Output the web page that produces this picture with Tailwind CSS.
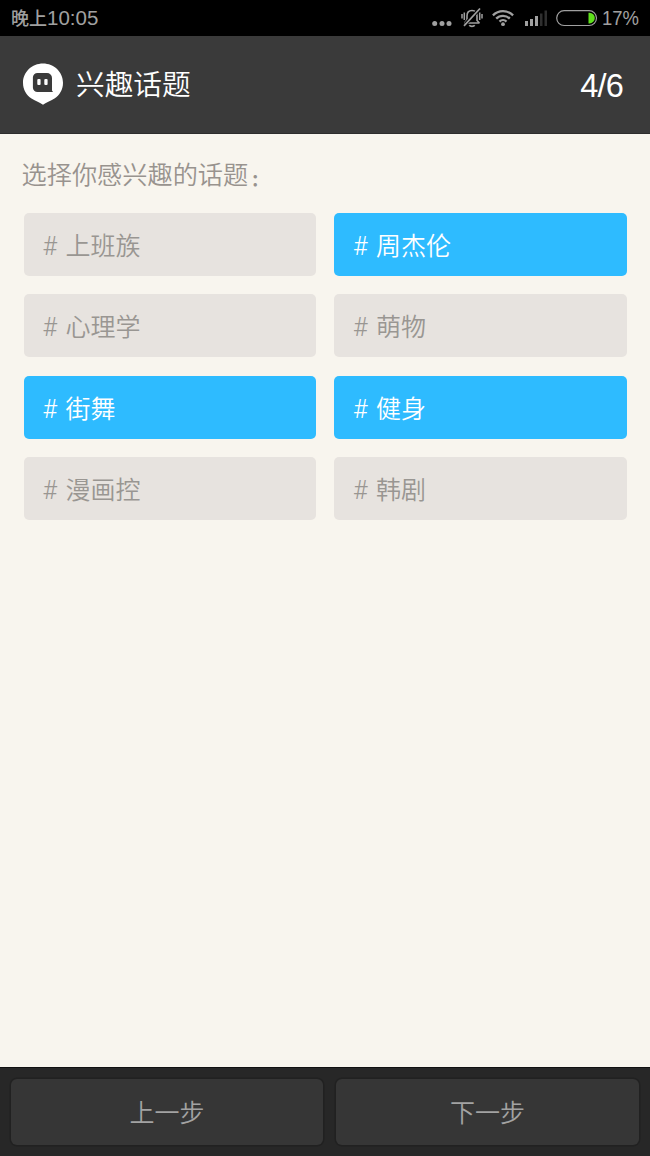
<!DOCTYPE html>
<html lang="zh-CN">
<head>
  <meta charset="UTF-8">
  <meta name="viewport" content="width=device-width, initial-scale=1.0">
  <title>兴趣话题</title>
  <script src="https://cdn.jsdelivr.net/npm/@tailwindcss/browser@4"></script>
</head>
<body class="w-[650px] h-[1156px] flex flex-col overflow-hidden bg-[#f8f5ee] font-['Liberation_Sans','Noto_Sans_CJK_SC',sans-serif] whitespace-nowrap">

  <!-- Status bar -->
  <div class="h-9 shrink-0 bg-black text-[#a0a0a0] flex items-center justify-between pl-[11px] pr-0.5">
    <span class="text-[20.500px] leading-9"><span class="text-[18px] font-medium">晚上</span>10:05</span>
    <div class="flex items-center h-9">
      <svg class="w-[218px] h-9" viewBox="430 0 218 36" fill="none">
        <g fill="#a0a0a0">
          <circle cx="434.7" cy="23.5" r="2.5"/>
          <circle cx="442" cy="23.5" r="2.5"/>
          <circle cx="449" cy="23.5" r="2.5"/>
        </g>
        <!-- muted bell -->
        <g stroke="#a0a0a0" stroke-width="1.6">
          <path d="M464.500 23h15M467 20.500V16c0-3.500 2-5.500 5-5.500s5 2 5 5.500v4.500l2.500 2.500M467 20l-2.500 3"/>
          <path d="M469.300 25.300c1 1.400 4.400 1.400 5.400 0"/>
          <path d="M464.300 12.500v7.500M462 14v4.500M479.700 12.500v7.500M482 14v4.500" stroke-width="1.500"/>
          <path d="M478.500 10L465.500 24" stroke="#000" stroke-width="3.600"/>
          <path d="M480 8.500L464 25.800" stroke-width="1.700"/>
        </g>
        <g stroke="#a0a0a0" stroke-width="2.300">
          <path d="M492.900 15.400a14.300 14.300 0 0 1 20.200 0M496.200 18.600a9.600 9.600 0 0 1 13.600 0M499.500 21.600a5 5 0 0 1 7 0"/>
          <circle cx="503" cy="24.200" r="1.900" fill="#a0a0a0" stroke="none"/>
        </g>
        <g fill="#a0a0a0">
          <path d="M525 21h3v5h-3zM530 19h3v7h-3zM535 16h3v10h-3z"/>
          <path d="M540 13.500h2.500v12.500H540zM544.500 10.500h2.500V26h-2.500z" fill="#2f2f2f"/>
        </g>
        <rect x="556.700" y="10.700" width="39.800" height="14.800" rx="7.400" stroke="#a0a0a0" stroke-width="1.200"/>
        <path d="M588.500 12.800h1a5.300 5.300 0 0 1 0 10.600h-1z" fill="#5fe01c"/>
        <text x="602" y="25" font-size="20" textLength="37" lengthAdjust="spacingAndGlyphs" fill="#a0a0a0">17%</text>
      </svg>
    </div>
  </div>

  <!-- Title bar -->
  <header class="h-[98px] shrink-0 bg-[#3a3a3a] border-b border-[#2d2d2d] text-white flex items-center pl-[23px] pr-[27px]">
    <svg class="w-10 h-[42px] -mt-[2px]" viewBox="0 0 40 42">
      <path d="M20 .5C9 .5 0 9 0 19.700c0 7.300 3.500 12.300 8.500 15.800 4 2.800 8.700 4 11.500 6.300 2.800-2.300 7.500-3.500 11.500-6.300 5-3.500 8.500-8.500 8.500-15.800C40 9 31 .5 20 .5z" fill="#fff"/>
      <path d="M14.500 10h9.500a5 5 0 0 1 5 5V27.500l1 1.500H14.500a4.600 4.600 0 0 1-4.600-4.600V14.600a4.600 4.600 0 0 1 4.600-4.600z" fill="#3a3a3a"/>
      <rect x="14.300" y="16" width="3.300" height="6" rx="1" fill="#fff"/>
      <rect x="21.300" y="16" width="3.300" height="6" rx="1" fill="#fff"/>
    </svg>
    <h1 class="ml-[13px] pt-px text-[28.700px] leading-10 font-[350]">兴趣话题</h1>
    <span class="ml-auto pt-0.5 text-[32.500px] leading-10 tracking-[-0.800px]">4/6</span>
  </header>

  <!-- Topics -->
  <main class="flex-1 px-[23.500px] pt-[23px]">
    <p class="-ml-[2px] h-9 text-[25.200px] leading-9 font-[350] text-[#98938e]">选择你感兴趣的话题<span class="inline-block translate-x-[3px] translate-y-0.5 text-[16px] font-black">：</span></p>
    <div class="mt-5 grid grid-cols-2 gap-x-[18px] gap-y-[18.300px] text-[25px] leading-[60px] font-[350] text-[#999692]">
      <div class="h-[63px] rounded-[5px] bg-[#e7e3df] flex pl-[19px] pt-[3px]"><span class="w-[23px] pt-px font-[Roboto]">#</span>上班族</div>
      <div class="h-[63px] rounded-[5px] bg-[#2ebbff] text-white flex pl-[19px] pt-[3px]"><span class="w-[23px] pt-px font-[Roboto]">#</span>周杰伦</div>
      <div class="h-[63px] rounded-[5px] bg-[#e7e3df] flex pl-[19px] pt-[3px]"><span class="w-[23px] pt-px font-[Roboto]">#</span>心理学</div>
      <div class="h-[63px] rounded-[5px] bg-[#e7e3df] flex pl-[19px] pt-[3px]"><span class="w-[23px] pt-px font-[Roboto]">#</span>萌物</div>
      <div class="h-[63px] rounded-[5px] bg-[#2ebbff] text-white flex pl-[19px] pt-[3px]"><span class="w-[23px] pt-px font-[Roboto]">#</span>街舞</div>
      <div class="h-[63px] rounded-[5px] bg-[#2ebbff] text-white flex pl-[19px] pt-[3px]"><span class="w-[23px] pt-px font-[Roboto]">#</span>健身</div>
      <div class="h-[63px] rounded-[5px] bg-[#e7e3df] flex pl-[19px] pt-[3px]"><span class="w-[23px] pt-px font-[Roboto]">#</span>漫画控</div>
      <div class="h-[63px] rounded-[5px] bg-[#e7e3df] flex pl-[19px] pt-[3px]"><span class="w-[23px] pt-px font-[Roboto]">#</span>韩剧</div>
    </div>
  </main>

  <!-- Bottom buttons -->
  <footer class="h-[89px] shrink-0 bg-[#272727] border-t border-[#111] flex gap-[13px] pt-[10.500px] pb-[11.500px] pl-[11px] pr-[11px] text-[25px] font-[350] text-[#a3a3a3]">
    <button class="w-[312px] rounded-[6px] bg-[#363636] shadow-[0_0_0_1.500px_#212121] pt-1">上一步</button>
    <button class="flex-1 rounded-[6px] bg-[#363636] shadow-[0_0_0_1.500px_#212121] pt-1">下一步</button>
  </footer>
</body>
</html>
